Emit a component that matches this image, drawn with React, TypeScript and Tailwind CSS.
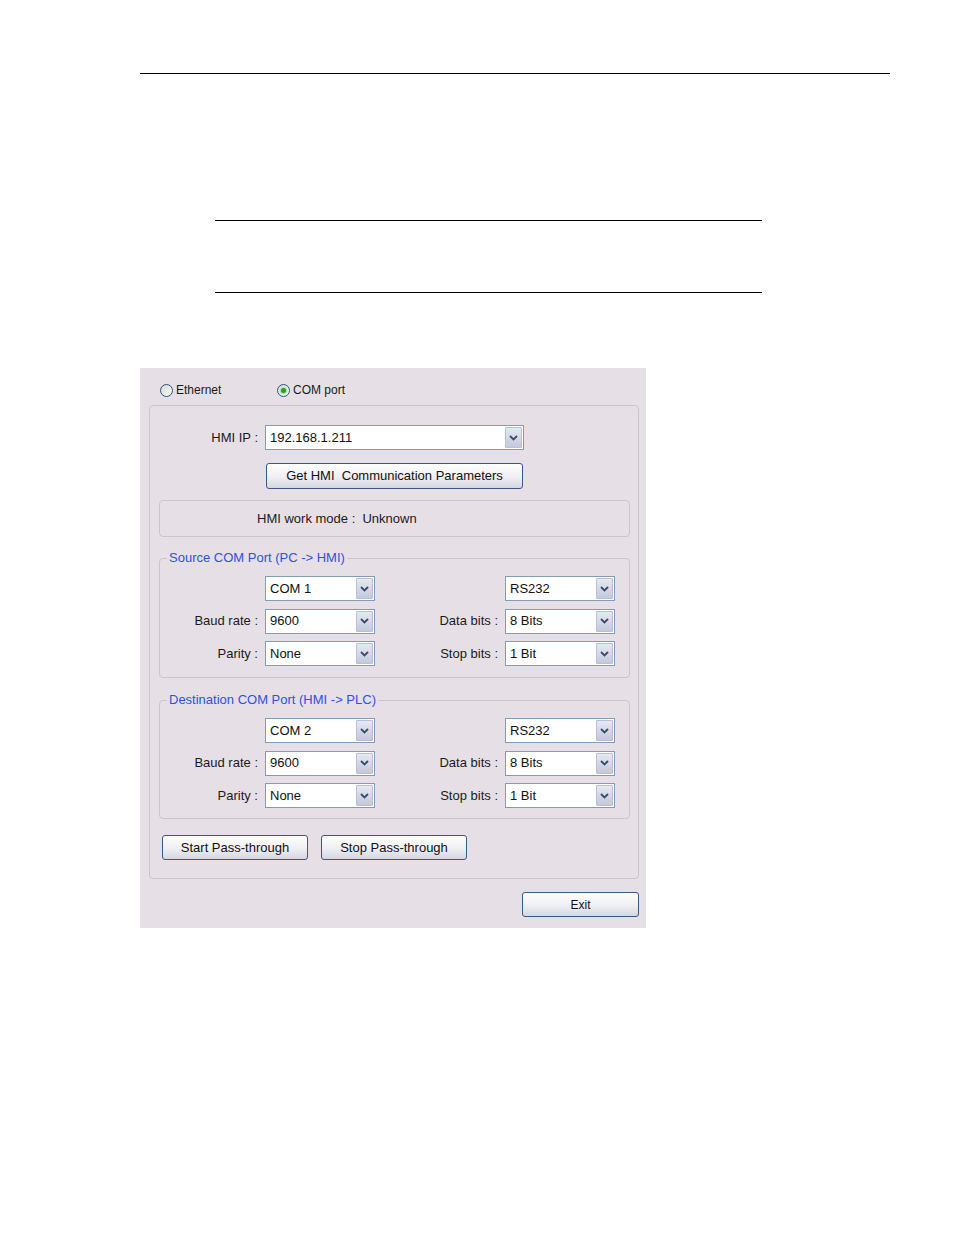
import React from "react";

function Arrow() {
  return (
    <div className="flex h-full w-[17px] items-center justify-center rounded-[1px] border border-[#b7c0d6] bg-gradient-to-b from-[#e6e9f2] to-[#c3c9dc]">
      <svg width="9" height="6" viewBox="0 0 9 6">
        <path d="M1 1 L4.5 4.5 L8 1" fill="none" stroke="#3a4b6b" strokeWidth="1.8" />
      </svg>
    </div>
  );
}

function Combo({ value, w }: { value: string; w: string }) {
  return (
    <div className={`flex h-[25px] ${w} items-stretch border border-[#7f9db9] bg-white p-px`}>
      <div className="flex flex-1 items-center pl-[3px] text-[13px] text-[#111]">{value}</div>
      <Arrow />
    </div>
  );
}

function Btn({ label, w, h, text }: { label: string; w: string; h: string; text: string }) {
  return (
    <div
      className={`flex ${w} ${h} items-center justify-center rounded-[3px] border border-[#3b5a82] bg-gradient-to-b from-[#fefefe] via-[#f1f1f5] to-[#d6d6e2] ${text} text-[#111]`}
    >
      {label}
    </div>
  );
}

function Radio({ checked }: { checked?: boolean }) {
  return (
    <div className="flex h-[13px] w-[13px] items-center justify-center rounded-full border border-[#2a5580] bg-gradient-to-br from-[#d8d8d4] to-[#fbfbfb]">
      {checked && <div className="h-[5px] w-[5px] rounded-full bg-[#22a322] shadow-[0_0_1px_1px_#a8dca8]" />}
    </div>
  );
}

function Row({ l1, v1, l2, v2 }: { l1: string; v1: string; l2: string; v2: string }) {
  return (
    <div className="flex h-[25px] items-center text-[13px] text-[#1a1a1a]">
      <div className="w-[98px] text-right">{l1}</div>
      <div className="ml-[7px]">
        <Combo value={v1} w="w-[110px]" />
      </div>
      <div className="w-[123px] text-right">{l2}</div>
      <div className="ml-[7px]">
        <Combo value={v2} w="w-[110px]" />
      </div>
    </div>
  );
}

function Group({ title, com, mt, pb }: { title: string; com: string; mt: string; pb: string }) {
  return (
    <fieldset className={`${mt} rounded-[4px] border border-[#c9c5cb] ${pb}`}>
      <legend className="ml-[7px] px-[2px] text-[13px] leading-[18px] text-[#2f51db]">{title}</legend>
      <div className="flex flex-col gap-[7.5px] pt-[9px]">
        <Row l1="" v1={com} l2="" v2="RS232" />
        <Row l1="Baud rate :" v1="9600" l2="Data bits :" v2="8 Bits" />
        <Row l1="Parity :" v1="None" l2="Stop bits :" v2="1 Bit" />
      </div>
    </fieldset>
  );
}

export default function App() {
  return (
    <div className="h-[1235px] w-[954px] overflow-hidden bg-white font-['Liberation_Sans',Arial,sans-serif]">
      <div className="ml-[140px] mt-[73px] h-px w-[750px] bg-black" />
      <div className="ml-[215px] mt-[146px] h-px w-[547px] bg-black" />
      <div className="ml-[215px] mt-[71px] h-px w-[547px] bg-black" />

      <div className="ml-[140px] mt-[75px] flex h-[560px] w-[506px] flex-col bg-[#e6e0e6] pl-[9px] pr-[7px] pt-[15px]">
        <div className="flex h-[14px] items-center text-[12px] text-[#1a1a1a]">
          <div className="ml-[11px] flex w-[117px] items-center gap-[3px]">
            <Radio />
            <span>Ethernet</span>
          </div>
          <div className="flex items-center gap-[3px]">
            <Radio checked />
            <span>COM port</span>
          </div>
        </div>

        <div className="mt-[8px] flex flex-col rounded-[4px] border border-[#c9c5cb] pb-[18px] pl-[9px] pr-[8px] pt-[19px]">
          <div className="flex h-[25px] items-center text-[13px] text-[#1a1a1a]">
            <div className="w-[99px] text-right">HMI IP :</div>
            <div className="ml-[7px]">
              <Combo value="192.168.1.211" w="w-[259px]" />
            </div>
          </div>

          <div className="ml-[107px] mt-[13px]">
            <Btn label="Get HMI  Communication Parameters" w="w-[257px]" h="h-[26px]" text="text-[13px] whitespace-pre" />
          </div>

          <div className="mt-[11px] flex h-[37px] items-center whitespace-pre rounded-[4px] border border-[#c9c5cb] pl-[97px] text-[13px] text-[#1a1a1a]">
            {"HMI work mode :  Unknown"}
          </div>

          <Group title="Source COM Port (PC -> HMI)" com="COM 1" mt="mt-[12px]" pb="pb-[11px]" />
          <Group title="Destination COM Port (HMI -> PLC)" com="COM 2" mt="mt-[13px]" pb="pb-[10px]" />

          <div className="ml-[3px] mt-[16px] flex gap-[13px]">
            <Btn label="Start Pass-through" w="w-[146px]" h="h-[25px]" text="text-[13px]" />
            <Btn label="Stop Pass-through" w="w-[146px]" h="h-[25px]" text="text-[13px]" />
          </div>
        </div>

        <div className="mt-[13px] self-end">
          <Btn label="Exit" w="w-[117px]" h="h-[25px]" text="text-[12px]" />
        </div>
      </div>
    </div>
  );
}
